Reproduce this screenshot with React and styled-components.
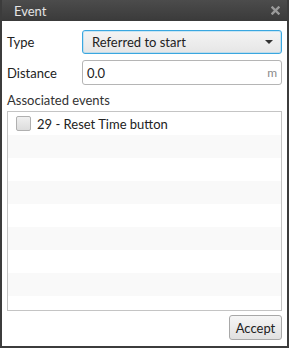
import React from 'react';
import styled, { createGlobalStyle } from 'styled-components';

const GlobalStyle = createGlobalStyle`
  html, body { margin: 0; padding: 0; background: #ffffff; }
  body { font-family: Lato, "Open Sans", sans-serif; }
`;

const ROWS = 9;

const CloseIcon = () => (
  <svg width="9" height="9" viewBox="0 0 9 9">
    <path d="M1.5 1.5 L7.5 7.5 M7.5 1.5 L1.5 7.5" stroke="#9a9a9a" strokeWidth="2.4" strokeLinecap="square" />
  </svg>
);

const App = () => (
  <>
    <GlobalStyle />
    <Window>
      <TitleBar>
        <TitleText>Event</TitleText>
        <CloseButton>
          <CloseIcon />
        </CloseButton>
      </TitleBar>
      <Body>
        <FieldRow>
          <Label>Type</Label>
          <Select>
            <span>Referred to start</span>
            <Caret />
          </Select>
        </FieldRow>
        <FieldRow>
          <Label>Distance</Label>
          <InputBox>
            <span>0.0</span>
            <Unit>m</Unit>
          </InputBox>
        </FieldRow>
        <SectionLabel>Associated events</SectionLabel>
        <List>
          {Array.from({ length: ROWS }).map((_, i) => (
            <ListRow key={i} $odd={i % 2 === 1}>
              {i === 0 && (
                <>
                  <Checkbox />
                  <RowText>29 - Reset Time button</RowText>
                </>
              )}
            </ListRow>
          ))}
        </List>
        <Footer>
          <Button>Accept</Button>
        </Footer>
      </Body>
    </Window>
  </>
);

const Window = styled.div`
  width: 289px;
  height: 348px;
  box-sizing: border-box;
  display: flex;
  flex-direction: column;
  background: #3c3c3c;
  padding: 0 2px 2px 2px;
`;

const TitleBar = styled.div`
  height: 21px;
  display: flex;
  align-items: center;
  justify-content: space-between;
  padding: 0 7px 0 12px;
  background: linear-gradient(#4c4c4c, #3a3a3a);
`;

const TitleText = styled.div`
  color: #e4e4e4;
  font-size: 13px;
`;

const CloseButton = styled.div`
  display: flex;
  align-items: center;
`;

const Body = styled.div`
  flex: 1;
  background: #ffffff;
  display: flex;
  flex-direction: column;
  padding: 9px 5px 0 5px;
`;

const FieldRow = styled.div`
  display: flex;
  align-items: center;
  margin-bottom: 6px;
`;

const Label = styled.div`
  width: 75px;
  font-size: 13px;
  color: #222222;
`;

const Select = styled.div`
  flex: 1;
  height: 24px;
  box-sizing: border-box;
  border: 1px solid #3aa7e0;
  border-radius: 3px;
  background: linear-gradient(#f4f4f4, #e6e6e6);
  display: flex;
  align-items: center;
  justify-content: space-between;
  padding: 0 8px 0 9px;
  font-size: 13px;
  color: #222222;
  box-shadow: inset 0 0 0 1px rgba(120, 200, 240, 0.35);
`;

const Caret = styled.div`
  width: 0;
  height: 0;
  border-left: 4px solid transparent;
  border-right: 4px solid transparent;
  border-top: 4px solid #333333;
`;

const InputBox = styled.div`
  flex: 1;
  height: 25px;
  box-sizing: border-box;
  border: 1px solid #b5b5b5;
  border-radius: 3px;
  background: #ffffff;
  display: flex;
  align-items: center;
  justify-content: space-between;
  padding: 0 4px 0 4px;
  font-size: 13px;
  color: #222222;
`;

const Unit = styled.span`
  color: #8a8a8a;
  font-size: 12px;
`;

const SectionLabel = styled.div`
  font-size: 13px;
  color: #333333;
  margin: 1px 0 3px 0;
`;

const List = styled.div`
  height: 200px;
  box-sizing: border-box;
  border: 1px solid #c4c4c4;
  overflow: hidden;
`;

const ListRow = styled.div`
  height: 23px;
  display: flex;
  align-items: center;
  padding-left: 8px;
  background: ${(p) => (p.$odd ? '#f9f9f9' : '#ffffff')};
`;

const Checkbox = styled.div`
  width: 15px;
  height: 15px;
  box-sizing: border-box;
  border: 1px solid #b0b0b0;
  border-radius: 2px;
  background: linear-gradient(#f0f0f0, #dcdcdc);
  margin-right: 6px;
`;

const RowText = styled.div`
  font-size: 13px;
  color: #222222;
`;

const Footer = styled.div`
  display: flex;
  justify-content: flex-end;
  padding-top: 4px;
`;

const Button = styled.div`
  width: 53px;
  height: 25px;
  box-sizing: border-box;
  border: 1px solid #a8a8a8;
  border-radius: 3px;
  background: linear-gradient(#f6f6f6, #e0e0e0);
  display: flex;
  align-items: center;
  justify-content: center;
  font-size: 13px;
  color: #222222;
`;

export default App;
